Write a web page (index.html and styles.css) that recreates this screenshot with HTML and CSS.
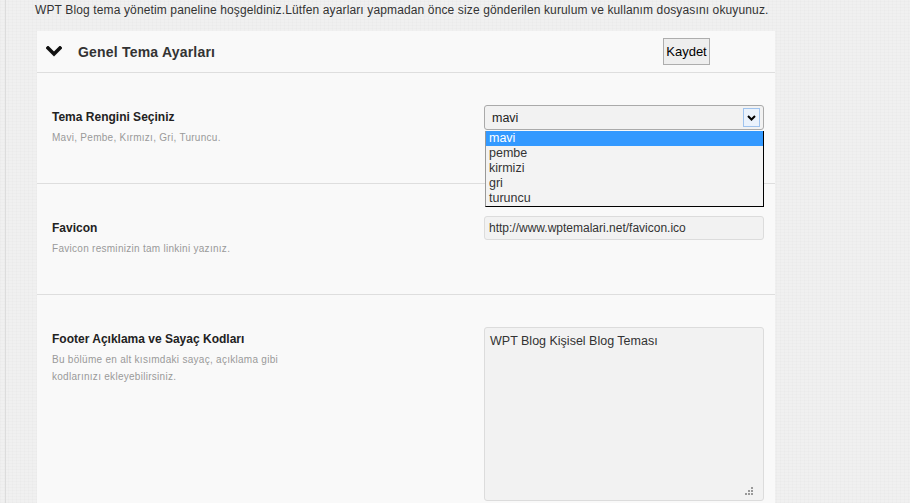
FILE: index.html
```html
<!DOCTYPE html>
<html lang="tr">

<head>
  <meta charset="UTF-8" />
  <title>WPT Blog Tema Ayarları</title>
  <link rel="stylesheet" href="styles.css">
</head>

<body>
  <div class="wrap">
    <p class="intro">WPT Blog tema yönetim paneline hoşgeldiniz.Lütfen ayarları yapmadan önce size gönderilen kurulum ve kullanım dosyasını okuyunuz.</p>

    <div class="panel">
      <div class="panel-head">
        <svg class="chevron" width="16" height="11" viewBox="0 0 16 11">
          <polyline points="2,2 8,8 14,2" fill="none" stroke="#111" stroke-width="3.6" stroke-linecap="square" />
        </svg>
        <h3>Genel Tema Ayarları</h3>
        <button class="save" type="button">Kaydet</button>
      </div>

      <div class="row">
        <div class="info">
          <h4>Tema Rengini Seçiniz</h4>
          <p>Mavi, Pembe, Kırmızı, Gri, Turuncu.</p>
        </div>
        <div class="control">
          <div class="select">
            <span>mavi</span>
            <span class="arrow">
              <svg width="9" height="6" viewBox="0 0 9 6">
                <polyline points="1,1 4.5,4.5 8,1" fill="none" stroke="#000" stroke-width="2" />
              </svg>
            </span>
            <ul class="options">
              <li class="active">mavi</li>
              <li>pembe</li>
              <li>kirmizi</li>
              <li>gri</li>
              <li>turuncu</li>
            </ul>
          </div>
        </div>
      </div>

      <div class="row">
        <div class="info">
          <h4>Favicon</h4>
          <p>Favicon resminizin tam linkini yazınız.</p>
        </div>
        <div class="control">
          <input class="field" type="text" value="http://www.wptemalari.net/favicon.ico" />
        </div>
      </div>

      <div class="row last">
        <div class="info">
          <h4>Footer Açıklama ve Sayaç Kodları</h4>
          <p>Bu bölüme en alt kısımdaki sayaç, açıklama gibi kodlarınızı ekleyebilirsiniz.</p>
        </div>
        <div class="control">
          <div class="area">
            <textarea>WPT Blog Kişisel Blog Teması</textarea>
            <svg class="grip" width="9" height="9" viewBox="0 0 9 9">
              <rect x="7" y="1" width="2" height="2" fill="#999" />
              <rect x="4" y="4" width="2" height="2" fill="#999" />
              <rect x="7" y="4" width="2" height="2" fill="#999" />
              <rect x="1" y="7" width="2" height="2" fill="#999" />
              <rect x="4" y="7" width="2" height="2" fill="#999" />
              <rect x="7" y="7" width="2" height="2" fill="#999" />
            </svg>
          </div>
        </div>
      </div>
    </div>
  </div>
</body>

</html>
```

FILE: styles.css
```css
html,
body {
  margin: 0;
  height: 100%;
}

body {
  background-color: #f0f0f0;
  background-image:
    repeating-linear-gradient(0deg, rgba(0, 0, 0, 0.012) 0 1px, transparent 1px 3px),
    repeating-linear-gradient(90deg, rgba(0, 0, 0, 0.012) 0 1px, transparent 1px 4px);
  font-family: "Liberation Sans", Arial, sans-serif;
  color: #333;
  overflow: hidden;
}

.wrap {
  margin-left: 5px;
  padding-left: 31px;
  border-left: 1px solid #dcdcdc;
  min-height: 100%;
}

.intro {
  margin: 0 0 0 -2px;
  padding-top: 3px;
  height: 28px;
  font-size: 12px;
  line-height: 15px;
  letter-spacing: 0.13px;
  color: #333;
  white-space: nowrap;
}

.panel {
  width: 738px;
  background: #f9f9f9;
}

.panel-head {
  height: 42px;
  box-sizing: border-box;
  border-bottom: 1px solid #dedede;
  display: flex;
  align-items: center;
  padding-left: 9px;
}

.chevron {
  display: block;
}

.panel-head h3 {
  margin: 0 0 0 16px;
  font-size: 14px;
  font-weight: bold;
  letter-spacing: 0.2px;
  color: #333;
}

.save {
  margin-left: auto;
  margin-right: 65px;
  width: 47px;
  height: 27px;
  padding: 0;
  border: 1px solid #adadad;
  background: #eeeeee;
  font-family: "Liberation Sans", Arial, sans-serif;
  font-size: 13px;
  color: #000;
}

.row {
  height: 111px;
  box-sizing: border-box;
  border-bottom: 1px solid #dedede;
  padding: 32px 11px 0 15px;
  display: flex;
  justify-content: space-between;
}

.row.last {
  height: auto;
  border-bottom: none;
  padding-bottom: 20px;
}

.info {
  width: 245px;
  padding-top: 4px;
}

.info h4 {
  margin: 0;
  font-size: 12px;
  line-height: 16px;
  font-weight: bold;
  color: #222;
}

.info p {
  margin: 4px 0 0;
  font-size: 10px;
  line-height: 17px;
  letter-spacing: 0.28px;
  color: #999;
}

.control {
  width: 280px;
}

.select {
  position: relative;
  height: 25px;
  box-sizing: border-box;
  border: 1px solid #aaa;
  border-radius: 3px;
  background: #f2f2f2;
  display: flex;
  align-items: center;
  justify-content: space-between;
  padding: 0 3px 0 7px;
  font-size: 12.5px;
  color: #222;
}

.arrow {
  width: 17px;
  height: 19px;
  box-sizing: border-box;
  border: 1px solid #9fc3ee;
  background: #eaf2fc;
  display: flex;
  align-items: center;
  justify-content: center;
}

.arrow svg {
  display: block;
}

.options {
  position: absolute;
  left: 0;
  right: -1px;
  top: 25px;
  margin: 0;
  padding: 0;
  list-style: none;
  background: #f3f3f3;
  border-left: 1px solid #999;
  border-right: 1px solid #000;
  border-bottom: 1px solid #000;
  z-index: 2;
}

.options li {
  height: 15px;
  line-height: 15px;
  padding-left: 3px;
  font-size: 12.5px;
  color: #333;
}

.options li.active {
  background: #3399ff;
  color: #fff;
}

.field {
  display: block;
  width: 280px;
  height: 24px;
  box-sizing: border-box;
  margin: 0;
  border: 1px solid #dcdcdc;
  border-radius: 3px;
  background: #f2f2f2;
  padding: 0 4px;
  font-family: "Liberation Sans", Arial, sans-serif;
  font-size: 12px;
  color: #333;
  outline: none;
}

.area {
  position: relative;
}

.area textarea {
  display: block;
  width: 280px;
  height: 174px;
  box-sizing: border-box;
  margin: 0;
  border: 1px solid #dcdcdc;
  border-radius: 3px;
  background: #f2f2f2;
  padding: 5px;
  font-family: "Liberation Sans", Arial, sans-serif;
  font-size: 12.5px;
  line-height: 16px;
  color: #333;
  resize: none;
  outline: none;
}

.grip {
  position: absolute;
  right: 11px;
  bottom: 6px;
}
```
